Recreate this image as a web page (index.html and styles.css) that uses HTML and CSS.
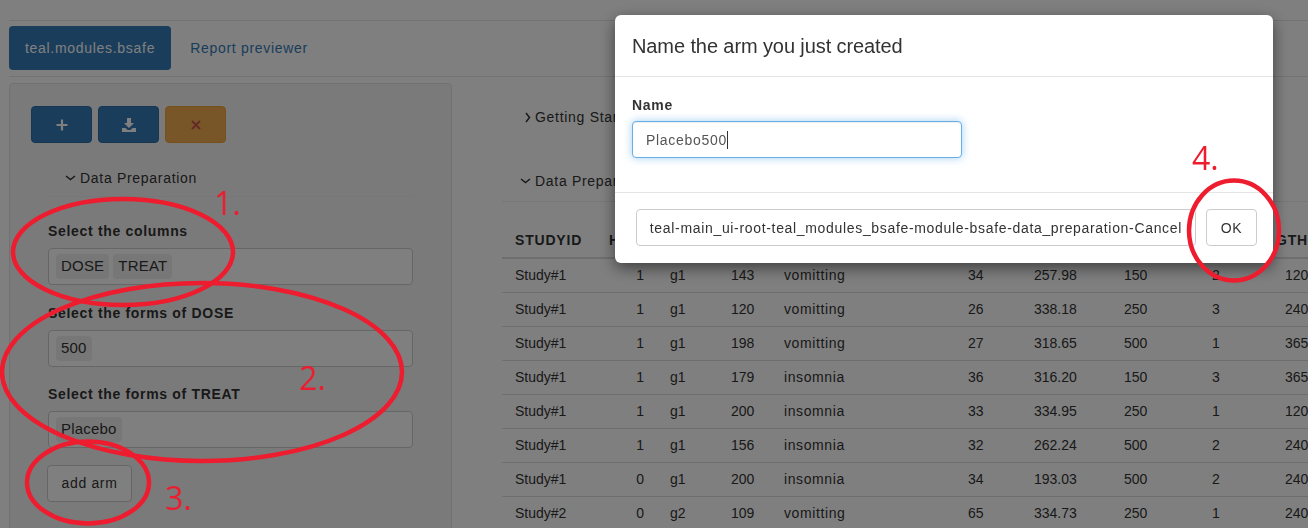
FILE: index.html
```html
<!DOCTYPE html>
<html lang="en">
<head>
    <meta charset="UTF-8">
    <meta name="viewport" content="width=device-width, initial-scale=1.0">
    <title>teal.modules.bsafe</title>
    <link rel="stylesheet" href="styles.css">
</head>
<body>
    <div class="page">
        <nav class="tabs">
            <a class="tab active">teal.modules.bsafe</a>
            <a class="tab">Report previewer</a>
        </nav>

        <div class="content">
            <aside class="well">
                <div class="well-buttons">
                    <button class="icon-btn primary">
                        <svg width="14" height="14" viewBox="0 0 14 14"><path d="M7 1.5v11M1.5 7h11" stroke="currentColor" stroke-width="2.2" fill="none"/></svg>
                    </button>
                    <button class="icon-btn primary">
                        <svg width="16" height="16" viewBox="0 0 16 16"><path d="M6 1h4v5h3l-5 5-5-5h3zM1 11h3.5l2 2h3l2-2H15v4H1z" fill="currentColor"/></svg>
                    </button>
                    <button class="icon-btn warning">
                        <svg width="12" height="12" viewBox="0 0 12 12"><path d="M2 2l8 8M10 2l-8 8" stroke="currentColor" stroke-width="1.8" fill="none"/></svg>
                    </button>
                </div>

                <div class="section-title side-title">
                    <svg class="chevron" width="11" height="6" viewBox="0 0 11 6"><path d="M1 1l4.5 3.5L10 1" stroke="currentColor" stroke-width="1.5" fill="none"/></svg>
                    Data Preparation
                </div>

                <div class="field">
                    <label>Select the columns</label>
                    <div class="select-box"><span class="tag">DOSE</span><span class="tag">TREAT</span></div>
                </div>
                <div class="field">
                    <label>Select the forms of DOSE</label>
                    <div class="select-box"><span class="tag">500</span></div>
                </div>
                <div class="field">
                    <label>Select the forms of TREAT</label>
                    <div class="select-box"><span class="tag">Placebo</span></div>
                </div>
                <button class="btn add-arm">add arm</button>
            </aside>

            <main class="main">
                <div class="section-title getting-started">
                    <svg class="chevron" width="6" height="11" viewBox="0 0 6 11"><path d="M1 1l3.5 4.5L1 10" stroke="currentColor" stroke-width="1.5" fill="none"/></svg>
                    <span class="clipped-title">Getting Started</span>
                </div>
                <div class="section-title data-prep">
                    <svg class="chevron" width="11" height="6" viewBox="0 0 11 6"><path d="M1 1l4.5 3.5L10 1" stroke="currentColor" stroke-width="1.5" fill="none"/></svg>
                    <span class="clipped-title">Data Preparation</span>
                </div>

                <table class="data-table">
                    <colgroup>
                        <col class="c1"><col class="c2"><col class="c3"><col class="c4"><col class="c5">
                        <col class="c6"><col class="c7"><col class="c8"><col class="c9"><col class="c10">
                    </colgroup>
                    <thead>
                        <tr><th>STUDYID</th><th>H</th><th></th><th></th><th></th><th></th><th></th><th></th><th></th><th class="last"><span class="length">GTH</span></th></tr>
                    </thead>
                    <tbody>
                        <tr><td>Study#1</td><td class="right">1</td><td>g1</td><td>143</td><td class="word">vomitting</td><td>34</td><td>257.98</td><td>150</td><td>2</td><td class="last">120</td></tr>
                        <tr><td>Study#1</td><td class="right">1</td><td>g1</td><td>120</td><td class="word">vomitting</td><td>26</td><td>338.18</td><td>250</td><td>3</td><td class="last">240</td></tr>
                        <tr><td>Study#1</td><td class="right">1</td><td>g1</td><td>198</td><td class="word">vomitting</td><td>27</td><td>318.65</td><td>500</td><td>1</td><td class="last">365</td></tr>
                        <tr><td>Study#1</td><td class="right">1</td><td>g1</td><td>179</td><td class="word">insomnia</td><td>36</td><td>316.20</td><td>150</td><td>3</td><td class="last">365</td></tr>
                        <tr><td>Study#1</td><td class="right">1</td><td>g1</td><td>200</td><td class="word">insomnia</td><td>33</td><td>334.95</td><td>250</td><td>1</td><td class="last">120</td></tr>
                        <tr><td>Study#1</td><td class="right">1</td><td>g1</td><td>156</td><td class="word">insomnia</td><td>32</td><td>262.24</td><td>500</td><td>2</td><td class="last">240</td></tr>
                        <tr><td>Study#1</td><td class="right">0</td><td>g1</td><td>200</td><td class="word">insomnia</td><td>34</td><td>193.03</td><td>500</td><td>2</td><td class="last">240</td></tr>
                        <tr><td>Study#2</td><td class="right">0</td><td>g2</td><td>109</td><td class="word">vomitting</td><td>65</td><td>334.73</td><td>250</td><td>1</td><td class="last">240</td></tr>
                    </tbody>
                </table>
            </main>
        </div>
    </div>

    <div class="backdrop"></div>

    <div class="modal">
        <div class="modal-header">Name the arm you just created</div>
        <div class="modal-body">
            <label>Name</label>
            <div class="name-input">Placebo500<span class="caret"></span></div>
        </div>
        <div class="modal-footer">
            <button class="btn">teal-main_ui-root-teal_modules_bsafe-module-bsafe-data_preparation-Cancel</button>
            <button class="btn ok-btn">OK</button>
        </div>
    </div>

    <svg class="notes" width="1308" height="528" viewBox="0 0 1308 528">
        <ellipse cx="123" cy="252" rx="110" ry="53"/>
        <ellipse cx="202" cy="372" rx="200" ry="89"/>
        <ellipse cx="88" cy="482.5" rx="61" ry="41"/>
        <ellipse cx="1234" cy="230.5" rx="45" ry="50"/>
        <text x="214" y="215">1.</text>
        <text x="299" y="390">2.</text>
        <text x="165" y="510">3.</text>
        <text x="1192" y="170">4.</text>
    </svg>
</body>
</html>
```

FILE: styles.css
```css
* {
    box-sizing: border-box;
}

html, body {
    margin: 0;
    height: 100%;
    overflow: hidden;
}

body {
    font-family: "Liberation Sans", Arial, sans-serif;
    font-size: 14px;
    line-height: 20px;
    color: #333;
    background: #fff;
}

.page {
    padding: 20px 0 0 9px;
    width: 1308px;
}

.tabs {
    display: flex;
    gap: 3px;
    padding: 5px 0 6px;
    border-top: 1px solid #e7e7e7;
    border-bottom: 1px solid #e7e7e7;
}

.tab {
    padding: 12px 16px;
    border-radius: 4px;
    color: #337ab7;
    letter-spacing: 0.7px;
}

.tab.active {
    background: #337ab7;
    color: #fff;
}

.content {
    display: flex;
    gap: 50px;
    margin-top: 6px;
}

.well {
    flex: 0 0 443px;
    height: 460px;
    padding: 22px 38px 0 21px;
    background: #f5f5f5;
    border: 1px solid #e3e3e3;
    border-radius: 4px;
}

.well-buttons {
    display: flex;
    gap: 6px;
}

.icon-btn {
    display: flex;
    align-items: center;
    justify-content: center;
    width: 61px;
    height: 37px;
    padding: 0;
    border: 1px solid transparent;
    border-radius: 4px;
}

.icon-btn.primary {
    background: #337ab7;
    border-color: #2e6da4;
    color: #fff;
}

.icon-btn.warning {
    background: #f0ad4e;
    border-color: #eea236;
    color: #c9534f;
}

.section-title {
    display: flex;
    align-items: center;
    height: 20px;
    letter-spacing: 0.7px;
}

.chevron {
    margin-right: 4px;
}

/* these two run in under the dialog, so they stop at its edge */
.clipped-title {
    width: 80px;
    overflow: hidden;
    white-space: nowrap;
}

.side-title {
    box-sizing: content-box;
    margin: 25px 0 24px 17px;
    padding-bottom: 9px;
    position: relative;
}

.side-title::after {
    content: "";
    position: absolute;
    left: -17px;
    right: 0;
    bottom: 0;
    border-bottom: 1px solid #eee;
}

.well label, .modal-body label {
    display: block;
    margin-bottom: 7px;
    font-weight: bold;
    letter-spacing: 0.68px;
}

.well .side-title, .well .field, .well .add-arm {
    margin-left: 17px;
}

.well .side-title {
    margin-left: 34px;
}

.field {
    margin-bottom: 17.5px;
}

.select-box {
    display: flex;
    gap: 4px;
    height: 37px;
    padding: 5px 7px;
    background: #fff;
    border: 1px solid #ccc;
    border-radius: 4px;
}

.tag {
    padding: 2px 5px;
    height: 25px;
    font-size: 15px;
    letter-spacing: 0.2px;
    background: #efefef;
    border-radius: 4px;
}

.btn {
    height: 37px;
    padding: 6px 13px;
    font: inherit;
    color: #333;
    background: #fff;
    border: 1px solid #ccc;
    border-radius: 4px;
    white-space: nowrap;
    letter-spacing: 0.67px;
}

.ok-btn {
    width: 51px;
    padding: 6px 0;
}

.well .add-arm {
    width: 85px;
    margin-left: 16px;
    margin-top: -0.5px;
    padding: 6px 0 8px;
}

.main {
    flex: 0 0 806px;
    padding-top: 24px;
}

.getting-started {
    padding-left: 23px;
}

.data-prep {
    box-sizing: content-box;
    margin-top: 44px;
    padding: 0 0 10px 18px;
    border-bottom: 1px solid #eee;
}

.data-table {
    width: 806px;
    margin-top: 20px;
    table-layout: fixed;
    border-collapse: collapse;
}

.c1 { width: 94px; }
.c2 { width: 61px; }
.c3 { width: 61px; }
.c4 { width: 53px; }
.c5 { width: 184px; }
.c6 { width: 66px; }
.c7 { width: 90px; }
.c8 { width: 88px; }
.c9 { width: 48px; }
.c10 { width: 61px; }

.data-table th {
    height: 36px;
    padding: 0 0 0 13px;
    text-align: left;
    white-space: nowrap;
    letter-spacing: 0.8px;
    border-bottom: 2px solid #ddd;
}

.data-table td {
    height: 34px;
    padding: 0 0 0 13px;
    white-space: nowrap;
    border-bottom: 1px solid #ddd;
}

.data-table td.word {
    letter-spacing: 0.6px;
}

.data-table td.right {
    padding: 0 13px 0 0;
    text-align: right;
}

.data-table th.last {
    padding-left: 29px;
}

.data-table td.last {
    padding-left: 38px;
}

.backdrop {
    position: fixed;
    inset: 0;
    background: rgba(0, 0, 0, 0.5);
}

.modal {
    position: fixed;
    left: 615px;
    top: 15px;
    width: 658px;
    height: 248px;
    background: #fff;
    border-radius: 6px;
    box-shadow: 0 5px 15px rgba(0, 0, 0, 0.5);
}

.modal-header {
    height: 62px;
    padding: 21px 17px 0;
    font-size: 20px;
    border-bottom: 1px solid #e5e5e5;
    letter-spacing: -0.1px;
}

.modal-body {
    height: 115px;
    padding: 18px 17px 0;
}

.modal-body label {
    margin-bottom: 6px;
}

.name-input {
    display: flex;
    align-items: center;
    width: 330px;
    height: 37px;
    padding: 0 13px;
    color: #555;
    letter-spacing: 0.7px;
    background: #fff;
    border: 1px solid #66afe9;
    border-radius: 4px;
    box-shadow: inset 0 1px 1px rgba(0, 0, 0, 0.075), 0 0 8px rgba(102, 175, 233, 0.6);
}

.caret {
    width: 1px;
    height: 18px;
    background: #333;
}

.modal-footer {
    display: flex;
    justify-content: flex-end;
    gap: 10px;
    padding: 16px 16px 0;
    border-top: 1px solid #e5e5e5;
}

.notes {
    position: fixed;
    left: 0;
    top: 0;
    pointer-events: none;
}

.notes ellipse {
    fill: none;
    stroke: #ed1c2e;
    stroke-width: 4.5;
}

.notes text {
    fill: #ed1c2e;
    font-family: "Open Sans", sans-serif;
    font-size: 32px;
}
```
